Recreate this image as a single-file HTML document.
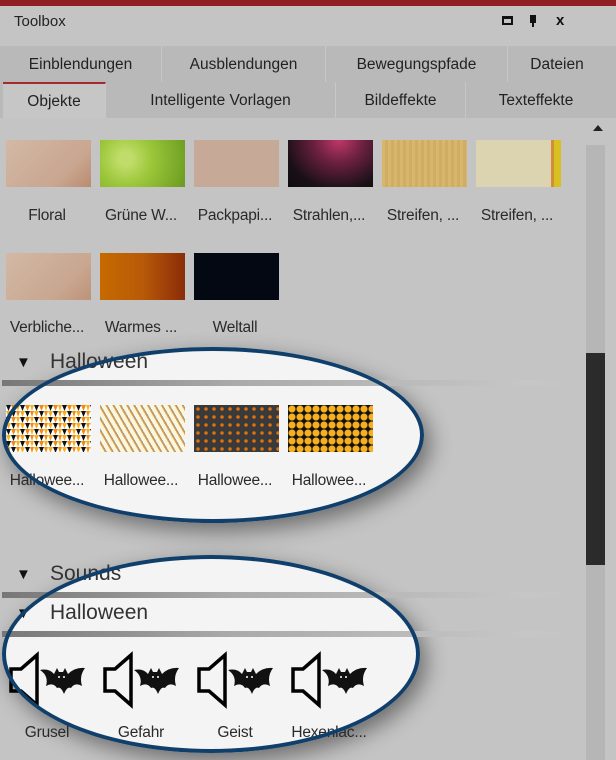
<!DOCTYPE html>
<html><head><meta charset="utf-8"><style>
*{margin:0;padding:0;box-sizing:border-box}
body{width:616px;height:760px;overflow:hidden;background:#c4c4c4;font-family:"Liberation Sans",sans-serif;position:relative;color:#222}
.a{position:absolute}
.top{left:0;top:0;width:616px;height:6px;background:#8e2024}
.title{left:14px;top:13px;font-size:15px;color:#222}
.tabs1{left:0;top:46px;width:616px;height:36px;background:#b9b9b9}
.tabs2{left:0;top:82px;width:616px;height:36px;background:#b9b9b9}
.tab{position:absolute;top:0;height:36px;font-size:15.5px;line-height:38px;text-align:center;color:#222;border-right:1px solid #c7c7c7}
.thumb{position:absolute;width:85px;height:47px}
.lbl{position:absolute;width:94px;text-align:center;font-size:15.5px;color:#2a2a2a;white-space:nowrap;letter-spacing:-0.2px}
.hdr{position:absolute;font-size:21px;color:#333;font-weight:300;left:50px}
.tri{position:absolute;left:16px;font-size:15px;color:#111}
.line{position:absolute;left:2px;width:580px;height:6px;background:linear-gradient(90deg,#777,#aaa 40%,#c6c6c6 90%,#c4c4c4)}
</style></head><body>
<div class="a top"></div>
<div class="a title">Toolbox</div>
<div class="a" style="left:502px;top:16px;width:11px;height:9px;border:2px solid #111;border-top-width:3px"></div>
<div class="a" style="left:530px;top:15px;width:6px;height:8px;background:#111"></div>
<div class="a" style="left:532px;top:23px;width:2px;height:4px;background:#111"></div>
<div class="a" style="left:556px;top:12px;font-size:15px;font-weight:bold;color:#111">x</div>
<div class="a tabs1">
<div class="tab" style="left:0;width:162px">Einblendungen</div>
<div class="tab" style="left:162px;width:164px">Ausblendungen</div>
<div class="tab" style="left:326px;width:182px">Bewegungspfade</div>
<div class="tab" style="left:508px;width:98px;border:none">Dateien</div>
</div>
<div class="a tabs2">
<div class="tab" style="left:3px;width:103px;background:#c6c6c6;border-top:2px solid #a52a2a;line-height:35px">Objekte</div>
<div class="tab" style="left:106px;width:230px">Intelligente Vorlagen</div>
<div class="tab" style="left:336px;width:130px">Bildeffekte</div>
<div class="tab" style="left:466px;width:140px;border:none">Texteffekte</div>
</div>
<div class="a" style="left:593px;top:125px;width:0;height:0;border-left:5px solid transparent;border-right:5px solid transparent;border-bottom:6px solid #222"></div>
<div class="a" style="left:586px;top:145px;width:19px;height:615px;background:#b6b6b6"></div>
<div class="a" style="left:586px;top:353px;width:19px;height:212px;background:#2b2b2b"></div>

<div class="thumb" style="left:6px;top:140px;background:linear-gradient(135deg,#d2b9a6,#c9a690 70%,#b98c70)"></div>
<div class="thumb" style="left:100px;top:140px;background:radial-gradient(circle at 30% 40%,#c0dc6a 10%,#9cc73a 40%,#6a9a20 100%)"></div>
<div class="thumb" style="left:194px;top:140px;background:#c6a996"></div>
<div class="thumb" style="left:288px;top:140px;background:radial-gradient(ellipse at 60% 0%,#c03868 0,#6a2040 35%,#1a1016 75%,#0e0c10)"></div>
<div class="thumb" style="left:382px;top:140px;background:repeating-linear-gradient(90deg,#d8b76c 0 3px,#cfad62 3px 6px)"></div>
<div class="thumb" style="left:476px;top:140px;background:linear-gradient(90deg,#dcd4b0 0 88%,#d28c3a 88% 92%,#d8c020 92%)"></div>
<div class="lbl" style="left:0;top:207px">Floral</div>
<div class="lbl" style="left:94px;top:207px">Grüne W...</div>
<div class="lbl" style="left:188px;top:207px">Packpapi...</div>
<div class="lbl" style="left:282px;top:207px">Strahlen,...</div>
<div class="lbl" style="left:376px;top:207px">Streifen, ...</div>
<div class="lbl" style="left:470px;top:207px">Streifen, ...</div>
<div class="thumb" style="left:6px;top:253px;background:linear-gradient(135deg,#d2b9a6,#c9a690 70%,#bd9278)"></div>
<div class="thumb" style="left:100px;top:253px;background:linear-gradient(90deg,#c66a00,#b85a08 50%,#8a2c08)"></div>
<div class="thumb" style="left:194px;top:253px;background:#030812"></div>
<div class="lbl" style="left:0;top:319px">Verbliche...</div>
<div class="lbl" style="left:94px;top:319px">Warmes ...</div>
<div class="lbl" style="left:188px;top:319px">Weltall</div>

<div class="a" style="left:2px;top:347px;width:422px;height:176px;border-radius:50%;background:#f4f4f4;box-shadow:6px 8px 22px rgba(0,0,0,.45)"></div>
<div class="a" style="left:2px;top:555px;width:418px;height:198px;border-radius:50%;background:#f4f4f4;box-shadow:6px 8px 22px rgba(0,0,0,.45)"></div>

<div class="tri" style="top:354px">▼</div><div class="hdr" style="top:350px">Halloween</div>
<div class="line" style="top:380px"></div>
<svg class="a" style="left:6px;top:405px" width="85" height="47"><defs><pattern id="tp" width="14" height="12" patternUnits="userSpaceOnUse"><rect width="14" height="12" fill="#fff"/><path d="M0 0H5L2.5 6Z" fill="#111"/><path d="M5 0H10L7.5 6Z" fill="#f08a10"/><path d="M10 0H14L12 6Z" fill="#f8b020"/><path d="M0 6H5L2.5 12Z" fill="#f8b020"/><path d="M5 6H10L7.5 12Z" fill="#111"/><path d="M10 6H14L12 12Z" fill="#f08a10"/></pattern></defs><rect width="85" height="47" fill="url(#tp)"/></svg>
<div class="thumb" style="left:100px;top:405px;background:repeating-linear-gradient(60deg,#fbf6dc 0 4px,#f0a030 4px 5px,#999 5px 6px),#fbf6dc"></div>
<div class="thumb" style="left:194px;top:405px;background:radial-gradient(circle,#e07010 1.5px,transparent 2px) 0 0/8px 8px,#3a3a3a"></div>
<div class="thumb" style="left:288px;top:405px;background:radial-gradient(circle,#f8b020 3px,#111 4px) 0 0/8px 8px,#f29000"></div>
<div class="lbl" style="left:0;top:472px">Hallowee...</div>
<div class="lbl" style="left:94px;top:472px">Hallowee...</div>
<div class="lbl" style="left:188px;top:472px">Hallowee...</div>
<div class="lbl" style="left:282px;top:472px">Hallowee...</div>

<div class="tri" style="top:566px">▼</div><div class="hdr" style="top:562px">Sounds</div>
<div class="line" style="top:592px"></div>
<div class="tri" style="top:605px">▼</div><div class="hdr" style="top:601px">Halloween</div>
<div class="line" style="top:631px"></div>

<svg class="a" style="left:0;top:650px" width="420" height="62">
<defs><g id="s">
<path d="M2 19 H12 L28 5 V55 L12 41 H2 Z" fill="none" stroke="#000" stroke-width="3.5"/>
<path d="M31 20 Q40 18 45 24 L48 18 L50 22 L54 22 L56 18 L59 24 Q66 17 76 18 Q70 26 73 36 Q66 32 62 38 Q58 36 55 44 Q52 36 48 38 Q44 32 37 36 Q40 26 31 20 Z" fill="#111"/>
<circle cx="50" cy="27" r="1" fill="#fff"/><circle cx="55" cy="27" r="1" fill="#fff"/>
</g></defs>
<use href="#s" x="9"/><use href="#s" x="103"/><use href="#s" x="197"/><use href="#s" x="291"/>
</svg>
<div class="lbl" style="left:0;top:724px">Grusel</div>
<div class="lbl" style="left:94px;top:724px">Gefahr</div>
<div class="lbl" style="left:188px;top:724px">Geist</div>
<div class="lbl" style="left:282px;top:724px">Hexenlac...</div>

<div class="a" style="left:2px;top:347px;width:422px;height:176px;border-radius:50%;border:4px solid #0f3f6a"></div>
<div class="a" style="left:2px;top:555px;width:418px;height:198px;border-radius:50%;border:4px solid #0f3f6a"></div>
</body></html>
